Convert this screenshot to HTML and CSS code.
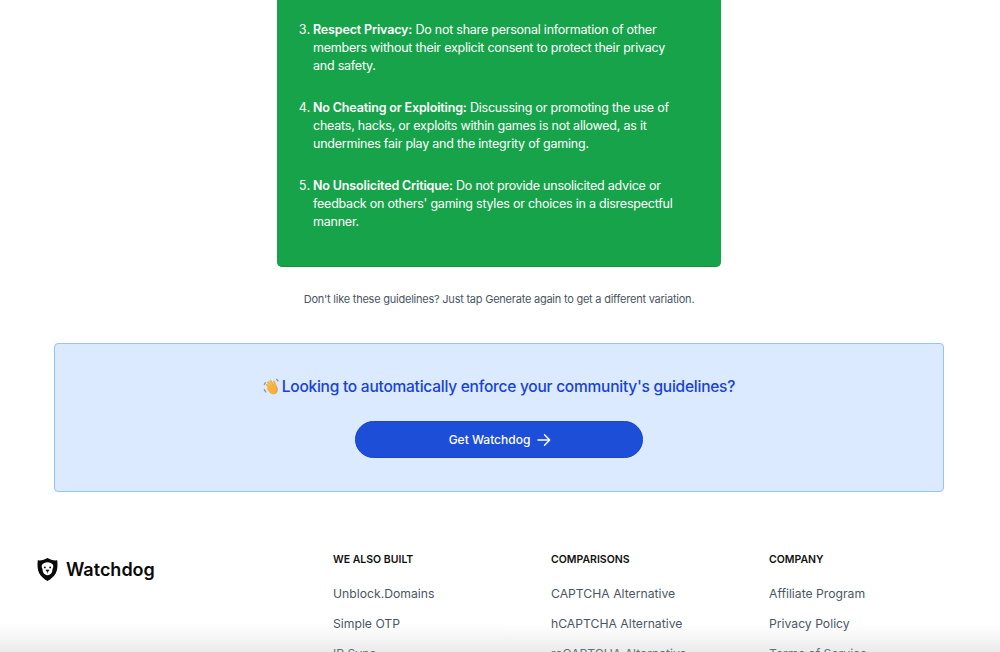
FILE: index.html
```html
<!DOCTYPE html>
<html lang="en">
<head>
    <meta charset="UTF-8">
    <meta name="viewport" content="width=device-width, initial-scale=1.0">
    <title>Watchdog - Community Guidelines Generator</title>
    <link rel="stylesheet" href="styles.css">
</head>
<body>

    <div class="content">
        <div class="guidelines">
            <ol class="rules" start="3">
                <li><strong>Respect Privacy:</strong> Do not share personal information of other members without their explicit consent to protect their privacy and safety.</li>
                <li><strong>No Cheating or Exploiting:</strong> Discussing or promoting the use of cheats, hacks, or exploits within games is not allowed, as it undermines fair play and the integrity of gaming.</li>
                <li><strong>No Unsolicited Critique:</strong> Do not provide unsolicited advice or feedback on others' gaming styles or choices in a disrespectful manner.</li>
            </ol>
        </div>

        <p class="note">Don't like these guidelines? Just tap Generate again to get a different variation.</p>

        <div class="cta">
            <h2 class="cta-title">
                <svg class="wave" viewBox="0 0 16 16" aria-hidden="true">
                    <path d="M1 6.500 2.500 4M1 10.500 2.800 13.500M12.500 1 14.500 3" stroke="#8a94a3" stroke-width="1.200" fill="none"/>
                    <g stroke="#f4b13c" stroke-linecap="round" fill="none">
                        <path d="M4.800 4 8.300 8.600" stroke-width="2"/>
                        <path d="M3.700 6.500 7.300 10.500" stroke-width="2"/>
                        <path d="M7 2.700 10 7.500" stroke-width="2"/>
                        <path d="M10.400 3.600 12.300 8.500" stroke-width="2"/>
                    </g>
                    <path d="M5 8.500 10 5.500l3.200 3.200c.8 2.800.3 5-1.800 6.300-2 1-4 .3-5.300-1.300L3.500 9.800z" fill="#f4b13c"/>
                    <path d="M13.200 8.700c.5 2.600 0 4.900-1.800 6" stroke="#d9902a" stroke-width=".7" fill="none"/>
                </svg>
                Looking to automatically enforce your community's guidelines?
            </h2>
            <a class="cta-btn" href="#">
                Get Watchdog
                <svg class="arrow" viewBox="0 0 14 14" aria-hidden="true">
                    <path d="M1 7h11.500M7.500 1.800 12.700 7l-5.200 5.200" stroke="#fff" stroke-width="1.400" fill="none" stroke-linecap="round" stroke-linejoin="round"/>
                </svg>
            </a>
        </div>
    </div>

    <div class="footer">
        <div class="brand">
            <svg class="logo" viewBox="0 0 22 25" aria-hidden="true">
                <path d="M11 .5 15 2.200c2 .8 4.200 1 6.200.7.500 5 .5 9.500-1.500 13.500-1.800 3.500-5 6-8.700 8.100-3.700-2.100-6.900-4.600-8.700-8.100C.3 12.400.3 7.900.8 2.900c2 .3 4.200.1 6.200-.7z" fill="#0a0a0a"/>
                <path d="M11 4.800c2.500 0 4.500 1 5.700 2.600.6 1.300.4 3-.3 4l-.6 3.400c-.8 2.200-2.700 3.700-4.800 3.700s-4-1.500-4.800-3.700l-.6-3.400c-.7-1-.9-2.700-.3-4C6.500 5.800 8.500 4.800 11 4.800z" fill="#fff"/>
                <circle cx="8.200" cy="10.300" r="1" fill="#0a0a0a"/>
                <circle cx="13.800" cy="10.300" r="1" fill="#0a0a0a"/>
                <path d="M9.300 13h3.400L11 15.200zM11 15v1.500" fill="#0a0a0a" stroke="#0a0a0a" stroke-width=".6"/>
            </svg>
            <span class="brand-name">Watchdog</span>
        </div>
        <div class="links">
            <h3>WE ALSO BUILT</h3>
            <a href="#">Unblock.Domains</a>
            <a href="#">Simple OTP</a>
            <a href="#">IP Sync</a>
        </div>
        <div class="links">
            <h3>COMPARISONS</h3>
            <a href="#">CAPTCHA Alternative</a>
            <a href="#">hCAPTCHA Alternative</a>
            <a href="#">reCAPTCHA Alternative</a>
        </div>
        <div class="links">
            <h3>COMPANY</h3>
            <a href="#">Affiliate Program</a>
            <a href="#">Privacy Policy</a>
            <a href="#">Terms of Service</a>
        </div>
    </div>

    <div class="fade"></div>

</body>
</html>
```

FILE: styles.css
```css
html, body {
    height: 652px;
    overflow: hidden;
}
body {
    margin: 0;
    font-family: Inter, "Liberation Sans", sans-serif;
    background-color: #fff;
    color: #111;
}
.content {
    margin-right: 2px;
}
.guidelines {
    width: 444px;
    box-sizing: border-box;
    margin: 0 auto;
    padding: 21px 44px 35px 23px;
    background-color: #16a34a;
    border-bottom: 1px solid #15913f;
    border-radius: 0 0 5px 5px;
    color: #fff;
    font-size: 12.500px;
    letter-spacing: -0.23px;
    line-height: 18px;
}
.guidelines strong {
    font-weight: 600;
    letter-spacing: -0.15px;
}
.rules {
    margin: 0;
    padding-left: 13px;
}
.rules li {
    margin-bottom: 24px;
}
.rules li:last-child {
    margin-bottom: 0;
}
.note {
    margin: 24px 0 0;
    text-align: center;
    font-size: 11px;
    letter-spacing: -0.23px;
    line-height: 16px;
    color: #4b5563;
}
.cta {
    box-sizing: border-box;
    width: 890px;
    height: 149px;
    margin: 36px auto 0;
    padding-top: 33px;
    background-color: #dbeafe;
    border: 1px solid #93c5fd;
    border-radius: 4px;
    text-align: center;
}
.cta-title {
    margin: 0;
    font-size: 15.500px;
    letter-spacing: -0.24px;
    line-height: 20px;
    font-weight: 500;
    color: #1742d4;
}
.wave {
    width: 17px;
    height: 17px;
    margin-right: -2px;
    vertical-align: -3px;
}
.cta-btn {
    display: flex;
    align-items: center;
    justify-content: center;
    gap: 7px;
    box-sizing: border-box;
    width: 288px;
    height: 37px;
    margin: 24px auto 0;
    padding-left: 2px;
    background-color: #1d4ed8;
    border: 1px solid #1a45c4;
    border-radius: 19px;
    color: #fff;
    font-size: 12px;
    font-weight: 500;
    text-decoration: none;
}
.arrow {
    width: 14px;
    height: 14px;
}
.footer {
    display: flex;
    margin-top: 60px;
    padding-left: 37px;
}
.brand {
    display: flex;
    align-items: center;
    gap: 8px;
    width: 296px;
    height: 25px;
    margin-top: 5px;
}
.logo {
    width: 21px;
    height: 25px;
}
.brand-name {
    font-size: 18px;
    font-weight: 600;
    color: #0a0a0a;
}
.links {
    width: 218px;
}
.links h3 {
    margin: 0 0 17px;
    font-size: 10.500px;
    line-height: 16px;
    font-weight: 600;
    color: #111;
}
.links a {
    display: block;
    margin-bottom: 12px;
    font-size: 12.200px;
    line-height: 18px;
    color: #4b5563;
    text-decoration: none;
}
.fade {
    position: fixed;
    left: 0;
    right: 0;
    bottom: 0;
    height: 28px;
    background: linear-gradient(to bottom, rgba(180, 180, 180, 0), rgba(180, 180, 180, 0.27));
}
```
